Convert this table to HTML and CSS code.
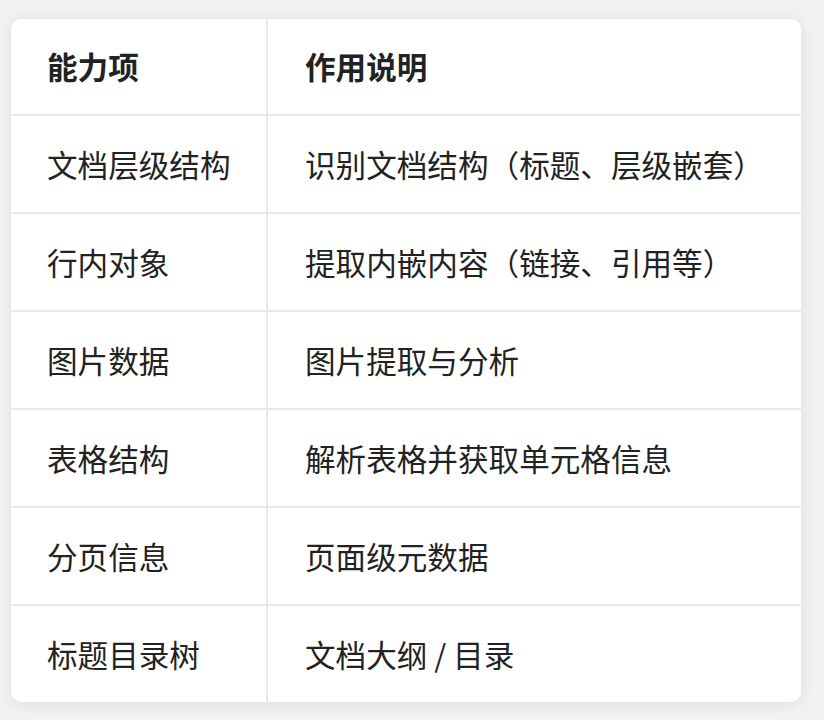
FILE: index.html
```html
<!DOCTYPE html>
<html lang="zh">
<head>
<meta charset="utf-8">
<link rel="stylesheet" href="styles.css">
</head>
<body>
<div class="card">
  <table class="tbl">
    <thead>
      <tr><th>能力项</th><th>作用说明</th></tr>
    </thead>
    <tbody>
      <tr><td>文档层级结构</td><td>识别文档结构（标题、层级嵌套）</td></tr>
      <tr><td>行内对象</td><td>提取内嵌内容（链接、引用等）</td></tr>
      <tr><td>图片数据</td><td>图片提取与分析</td></tr>
      <tr><td>表格结构</td><td>解析表格并获取单元格信息</td></tr>
      <tr><td>分页信息</td><td>页面级元数据</td></tr>
      <tr><td>标题目录树</td><td>文档大纲 / 目录</td></tr>
    </tbody>
  </table>
</div>
</body>
</html>
```

FILE: styles.css
```css
html, body {
  margin: 0;
  padding: 0;
}
body {
  background: #f2f2f2;
  font-family: "Noto Sans CJK SC", "Noto Sans", sans-serif;
  color: #222;
  padding: 19px 23px 17px 11px;
}
.card {
  width: 790px;
  background: #fff;
  border-radius: 10px;
  box-shadow: 0 2px 16px rgba(0, 0, 0, 0.09);
  overflow: hidden;
}
.tbl {
  width: 100%;
  border-collapse: collapse;
  table-layout: fixed;
}
.tbl th, .tbl td {
  height: 96px;
  padding: 0 0 0 36px;
  font-size: 30.6px;
  line-height: 1;
  text-align: left;
  vertical-align: middle;
  border-right: 2px solid #e9e9e9;
  border-bottom: 2px solid #e9e9e9;
}
.tbl th {
  font-weight: 700;
  height: 95px;
}
.tbl th:first-child, .tbl td:first-child {
  width: 219px;
}
.tbl th:last-child, .tbl td:last-child {
  border-right: none;
  padding-left: 37px;
}
.tbl tbody tr:last-child td {
  border-bottom: none;
}
```
